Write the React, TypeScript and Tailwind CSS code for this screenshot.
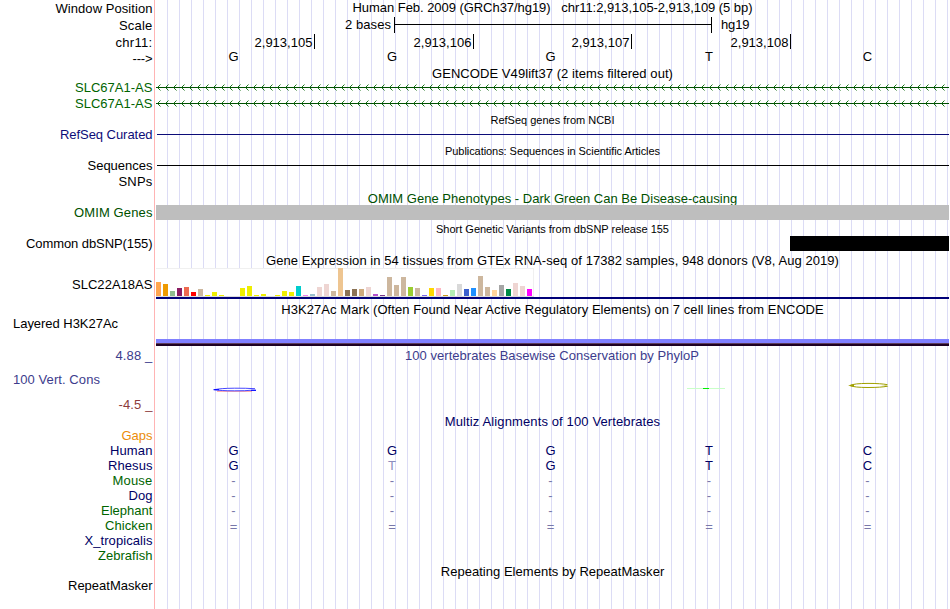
import { useLayoutEffect, useRef } from "react";

// Text whose letter spacing is adjusted so that it occupies a given width.
function FitText({ text, width, className = "" }: { text: string; width: number; className?: string }) {
  const ref = useRef<HTMLSpanElement>(null);
  useLayoutEffect(() => {
    const el = ref.current;
    if (!el) return;
    el.style.letterSpacing = "0px";
    const natural = el.getBoundingClientRect().width;
    el.style.letterSpacing = `${(width - natural) / text.length}px`;
  }, [text, width]);
  return (
    <span ref={ref} className={`inline-block whitespace-pre ${className}`}>
      {text}
    </span>
  );
}

const GREEN = "text-[#006400]";
const NAVY = "text-[#000064]";

const labels: { t: string; w: number; c?: string }[] = [
  { t: "Window Position", w: 97, c: "mt-px" },
  { t: "Scale", w: 33.5, c: "mt-0.5" },
  { t: "chr11:", w: 37, c: "mt-0.5" },
  { t: "--->", w: 20, c: "mt-px" },
  { t: "SLC67A1-AS", w: 77.5, c: "mt-3.5 text-[#006400]" },
  { t: "SLC67A1-AS", w: 77.5, c: "mt-px text-[#006400]" },
  { t: "RefSeq Curated", w: 92.5, c: "mt-4 text-[#0c0c78]" },
  { t: "Sequences", w: 65, c: "mt-4" },
  { t: "SNPs", w: 34, c: "mt-px" },
  { t: "OMIM Genes", w: 78.5, c: "mt-4 text-[#005000]" },
  { t: "Common dbSNP(155)", w: 126.5, c: "mt-4" },
  { t: "SLC22A18AS", w: 80.5, c: "mt-[26px]" },
  { t: "Layered H3K27Ac", w: 105, c: "mt-6 self-start ml-[13px]" },
  { t: "4.88 _", w: 37, c: "mt-[17px] text-[#3c3c8c]" },
  { t: "100 Vert. Cons", w: 87, c: "mt-[9px] self-start ml-[13px] text-[#3c3c8c]" },
  { t: "-4.5 _", w: 34, c: "mt-2.5 text-[#8c3c3c]" },
  { t: "Gaps", w: 31, c: "mt-4 text-[#eb8c0a]" },
  { t: "Human", w: 42.5, c: NAVY },
  { t: "Rhesus", w: 44.5, c: NAVY },
  { t: "Mouse", w: 40, c: GREEN },
  { t: "Dog", w: 24, c: NAVY },
  { t: "Elephant", w: 51.5, c: GREEN },
  { t: "Chicken", w: 47.5, c: GREEN },
  { t: "X_tropicalis", w: 68, c: NAVY },
  { t: "Zebrafish", w: 54.5, c: GREEN },
  { t: "RepeatMasker", w: 84.5, c: "mt-[15px]" },
];

function Title({ text, width, className }: { text: string; width: number; className: string }) {
  return (
    <div className={`flex h-[15px] shrink-0 justify-center ${className}`}>
      <FitText text={text} width={width} />
    </div>
  );
}

function Bases({ bases, className = "" }: { bases: string; className?: string }) {
  return (
    <div className={`-ml-[1.5px] grid h-[15px] shrink-0 grid-cols-[158px_159px_158px_159px_158px] text-center ${className}`}>
      {bases.split("").map((b, i) => (
        <span key={i} className={b === "t" ? "text-[#8c8cbe]" : ""}>
          {b.toUpperCase()}
        </span>
      ))}
    </div>
  );
}

function Transcript({ className }: { className: string }) {
  return (
    <svg width="793" height="7" className={`block shrink-0 ${className}`} fill="none" stroke="#006400">
      <path d="M0 3.5H793" stroke="#005000" />
      {Array.from({ length: 99 }, (_, i) => (
        <path key={i} d={`M${4.5 + i * 8} .5L${1.5 + i * 8} 3.5L${4.5 + i * 8} 6.5`} strokeWidth="0.9" />
      ))}
    </svg>
  );
}

const Y = "#eeee00";
const TAN = "#cdb79e";
const PINK = "#eed5d2";
const bars: [number, string][] = [
  [14, "#ffa54f"], [12, "#ee9a00"], [5, "#8fbc8f"], [8, "#8b1c62"], [9, "#ee6a50"], [4, "#ff0000"],
  [7, TAN], [1, Y], [4, Y], [1, Y], [0, Y], [0, Y], [8, Y], [10, Y], [1, Y], [2, Y], [0, Y], [1, Y],
  [5, Y], [4, Y], [10, "#00cdcd"], [1, "#ee82ee"], [2, "#9ac0cd"], [9, PINK], [12, PINK], [5, TAN],
  [28, "#eec591"], [6, "#8b7355"], [7, "#8b7355"], [7, "#cdaa7d"], [9, PINK], [2, "#b452cd"],
  [1, "#7a378b"], [19, TAN], [11, TAN], [19, TAN], [9, "#9acd32"], [8, TAN], [1, "#7a67ee"],
  [8, "#ffd700"], [8, "#ffb6c1"], [1, "#cd9b1d"], [6, "#b4eeb4"], [12, "#d9d9d9"], [7, "#3a5fcd"],
  [8, "#1e90ff"], [20, TAN], [9, TAN], [6, "#ffd39b"], [11, "#a6a6a6"], [7, "#008b45"], [13, PINK],
  [10, PINK], [7, "#ff00ff"],
];

export default function App() {
  return (
    <div className="flex h-[609px] w-[950px] overflow-hidden bg-white font-['Liberation_Sans',Arial,sans-serif] text-[13px] leading-[15px] text-black">
      <div className="flex w-[154px] shrink-0 flex-col items-end pr-[1.5px]">
        {labels.map((l, i) => (
          <FitText key={i} text={l.t} width={l.w} className={`h-[15px] shrink-0 ${l.c ?? ""}`} />
        ))}
      </div>
      <div className="mr-px w-px shrink-0 bg-[#ffb4b4]" />
      <div className="flex w-[793px] shrink-0 flex-col bg-[repeating-linear-gradient(to_right,transparent_0px_11px,#dcdcf5_11px_12px)]">
        <Title text="Human Feb. 2009 (GRCh37/hg19)   chr11:2,913,105-2,913,109 (5 bp)" width={400} className="" />
        <div className="mt-0.5 flex h-[16px] shrink-0">
          <div className="flex w-[238px] justify-end pr-[3px]">
            <FitText text="2 bases" width={46} />
          </div>
          <div className="flex w-[318px] items-center border-x border-black">
            <div className="mb-px h-px w-full bg-black" />
          </div>
          <FitText text="hg19" width={28.5} className="ml-[9px]" />
        </div>
        <div className="mt-px grid h-[15px] shrink-0 grid-cols-[159px_159px_158px_159px] leading-[17px]">
          {["2,913,105", "2,913,106", "2,913,107", "2,913,108"].map((n) => (
            <div key={n} className="flex h-[15px] justify-end border-r border-black pr-[1.5px]">
              <FitText text={n} width={58} />
            </div>
          ))}
        </div>
        <Bases bases="GGGTC" />
        <Title text="GENCODE V49lift37 (2 items filtered out)" width={241} className="mt-0.5" />
        <Transcript className="mt-[3px]" />
        <Transcript className="mt-[9px]" />
        <Title text="RefSeq genes from NCBI" width={124} className="mt-1.5 text-[11px]" />
        <div className="ml-px mt-1.5 h-px shrink-0 bg-[#0c0c78]" />
        <Title text="Publications: Sequences in Scientific Articles" width={215} className="mt-[9px] text-[11px]" />
        <div className="ml-px mt-1.5 h-px shrink-0 bg-black" />
        <div className="mt-[25px] h-[14px] shrink-0 overflow-hidden">
          <Title
            text="OMIM Gene Phenotypes - Dark Green Can Be Disease-causing"
            width={369.5}
            className="text-[#005000]"
          />
        </div>
        <div className="h-[15px] shrink-0 bg-[#bebebe]" />
        <Title text="Short Genetic Variants from dbSNP release 155" width={233} className="mt-0.5 text-[11px]" />
        <div className="-mt-px h-[15px] w-[159px] shrink-0 self-end bg-black" />
        <Title
          text="Gene Expression in 54 tissues from GTEx RNA-seq of 17382 samples, 948 donors (V8, Aug 2019)"
          width={573}
          className="mt-0.5"
        />
        <div className="h-[29px] w-[378px] shrink-0 border-b border-[#dcdcdc] bg-white shadow-[inset_-1px_1px_0_#f0f0f0]">
          <div className="flex h-full items-end gap-0.5">
            {bars.map(([h, color], i) => (
              <div key={i} className="w-[5px] shrink-0" style={{ height: h, backgroundColor: color }} />
            ))}
          </div>
        </div>
        <div className="h-0.5 shrink-0 bg-[#000078]" />
        <Title
          text="H3K27Ac Mark (Often Found Near Active Regulatory Elements) on 7 cell lines from ENCODE"
          width={542.5}
          className="mt-[3px]"
        />
        <div className="mt-[22px] h-[7px] shrink-0 border-b-2 border-[#1e0022] bg-[#5d3c5d]">
          <div className="h-1 bg-[#8080ff]" />
        </div>
        <Title
          text="100 vertebrates Basewise Conservation by PhyloP"
          width={294}
          className="mt-0.5 pr-px text-[#3c3c8c]"
        />
        <svg width="793" height="14" className="mt-[17px] block shrink-0" fill="none">
          <path d="M61 11.4H96" stroke="#ff8080" strokeWidth="0.7" />
          <path
            d="M99 8.7Q90 8.1 78.500 8.200Q64 8.300 58.500 9.700Q64 10.800 78.500 10.800Q90 10.900 96 10.200L100 10.300"
            stroke="#1818ff"
            strokeWidth="0.8"
            fill="#fff"
          />
          <path d="M57.500 9.700H63M95 10.300H100" stroke="#0000ff" />
          <path d="M531 8.500H569" stroke="#c8ffc8" />
          <path d="M547 8.500H553" stroke="#00f000" />
          <path
            d="M731.500 4.700Q725 3.400 712 3.400Q698 3.400 694 5.500Q698 7.500 712 7.500Q725 7.500 731.500 6.200"
            stroke="#a0a000"
            fill="#fff"
          />
          <path d="M692 5.500L698 4V7ZM725 6L732.500 6.500L730 5.500Z" fill="#a0a000" />
        </svg>
        <Title text="Multiz Alignments of 100 Vertebrates" width={215.5} className="mt-5 text-[#000064]" />
        <Bases bases="GGGTC" className="mt-3.5 text-[#000064]" />
        <Bases bases="GtGTC" className="text-[#000064]" />
        <Bases bases="-----" className="text-[#7878aa]" />
        <Bases bases="-----" className="text-[#7878aa]" />
        <Bases bases="-----" className="text-[#7878aa]" />
        <Bases bases="=====" className="leading-[17px] text-[#7878aa]" />
        <Title text="Repeating Elements by RepeatMasker" width={223.5} className="mt-[31px]" />
      </div>
    </div>
  );
}
